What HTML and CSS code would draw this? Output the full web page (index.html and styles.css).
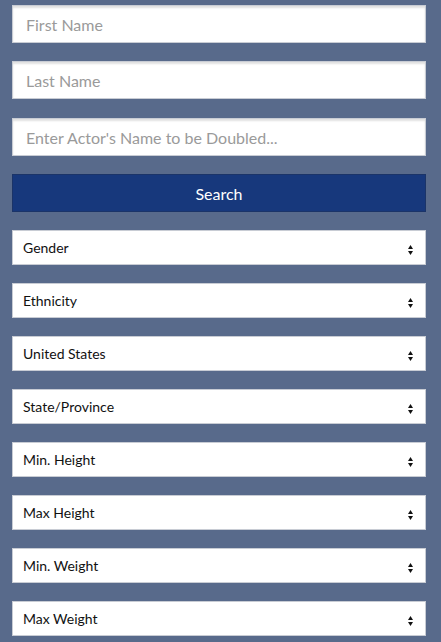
FILE: index.html
```
<!DOCTYPE html>
<html lang="en">
<head>
<meta charset="utf-8">
<title>Search</title>
<link rel="stylesheet" href="styles.css">
</head>
<body>
<form class="search-form">
  <input class="text-field" type="text" placeholder="First Name">
  <input class="text-field mid" type="text" placeholder="Last Name">
  <input class="text-field" type="text" placeholder="Enter Actor's Name to be Doubled...">
  <button class="search-btn" type="button">Search</button>
  <div class="selects">
    <div class="select-wrap"><select class="select-field"><option>Gender</option></select><svg class="arrows" width="5" height="10" viewBox="0 0 5 10"><path d="M2.5 0 L5 4 L0 4 Z M0 6 L5 6 L2.5 10 Z" fill="#111"/></svg></div>
    <div class="select-wrap"><select class="select-field"><option>Ethnicity</option></select><svg class="arrows" width="5" height="10" viewBox="0 0 5 10"><path d="M2.5 0 L5 4 L0 4 Z M0 6 L5 6 L2.5 10 Z" fill="#111"/></svg></div>
    <div class="select-wrap"><select class="select-field"><option>United States</option></select><svg class="arrows" width="5" height="10" viewBox="0 0 5 10"><path d="M2.5 0 L5 4 L0 4 Z M0 6 L5 6 L2.5 10 Z" fill="#111"/></svg></div>
    <div class="select-wrap"><select class="select-field"><option>State/Province</option></select><svg class="arrows" width="5" height="10" viewBox="0 0 5 10"><path d="M2.5 0 L5 4 L0 4 Z M0 6 L5 6 L2.5 10 Z" fill="#111"/></svg></div>
    <div class="select-wrap"><select class="select-field"><option>Min. Height</option></select><svg class="arrows" width="5" height="10" viewBox="0 0 5 10"><path d="M2.5 0 L5 4 L0 4 Z M0 6 L5 6 L2.5 10 Z" fill="#111"/></svg></div>
    <div class="select-wrap"><select class="select-field"><option>Max Height</option></select><svg class="arrows" width="5" height="10" viewBox="0 0 5 10"><path d="M2.5 0 L5 4 L0 4 Z M0 6 L5 6 L2.5 10 Z" fill="#111"/></svg></div>
    <div class="select-wrap"><select class="select-field"><option>Min. Weight</option></select><svg class="arrows" width="5" height="10" viewBox="0 0 5 10"><path d="M2.5 0 L5 4 L0 4 Z M0 6 L5 6 L2.5 10 Z" fill="#111"/></svg></div>
    <div class="select-wrap"><select class="select-field"><option>Max Weight</option></select><svg class="arrows" width="5" height="10" viewBox="0 0 5 10"><path d="M2.5 0 L5 4 L0 4 Z M0 6 L5 6 L2.5 10 Z" fill="#111"/></svg></div>
  </div>
</form>
</body>
</html>
```
FILE: styles.css
```
html, body {
  margin: 0;
  padding: 0;
  background: #586a8b;
  font-family: Lato, "Liberation Sans", sans-serif;
}
.search-form {
  width: 414px;
  padding: 5px 0 0 12px;
  display: flex;
  flex-direction: column;
}
.text-field {
  box-sizing: border-box;
  height: 38px;
  width: 100%;
  margin: 0 0 18px 0;
  padding: 0 13px;
  border: 1px solid #c8ccd4;
  background: #fff;
  box-shadow: inset 0 2px 2px rgba(0,0,0,0.12);
  font-family: inherit;
  font-size: 16px;
  color: #333;
  outline: none;
}
.text-field.mid {
  margin-bottom: 19px;
}
.text-field::placeholder {
  color: #9a9a9a;
  opacity: 1;
}
.search-btn {
  height: 38px;
  width: 100%;
  margin: 0 0 18px 0;
  border: 1px solid #1b3468;
  background: #17387c;
  color: #fff;
  font-family: inherit;
  font-size: 16px;
  padding: 0;
}
.selects {
  display: flex;
  flex-direction: column;
  gap: 18px;
}
.select-wrap {
  position: relative;
  height: 35px;
}
.select-field {
  -webkit-appearance: none;
  appearance: none;
  box-sizing: border-box;
  width: 100%;
  height: 35px;
  margin: 0;
  padding: 0 10px;
  border: 1px solid #c8ccd4;
  border-radius: 0;
  background: #fff;
  font-family: inherit;
  font-size: 14px;
  color: #111;
  outline: none;
}
.arrows {
  position: absolute;
  right: 13px;
  top: 15px;
  pointer-events: none;
}
```
